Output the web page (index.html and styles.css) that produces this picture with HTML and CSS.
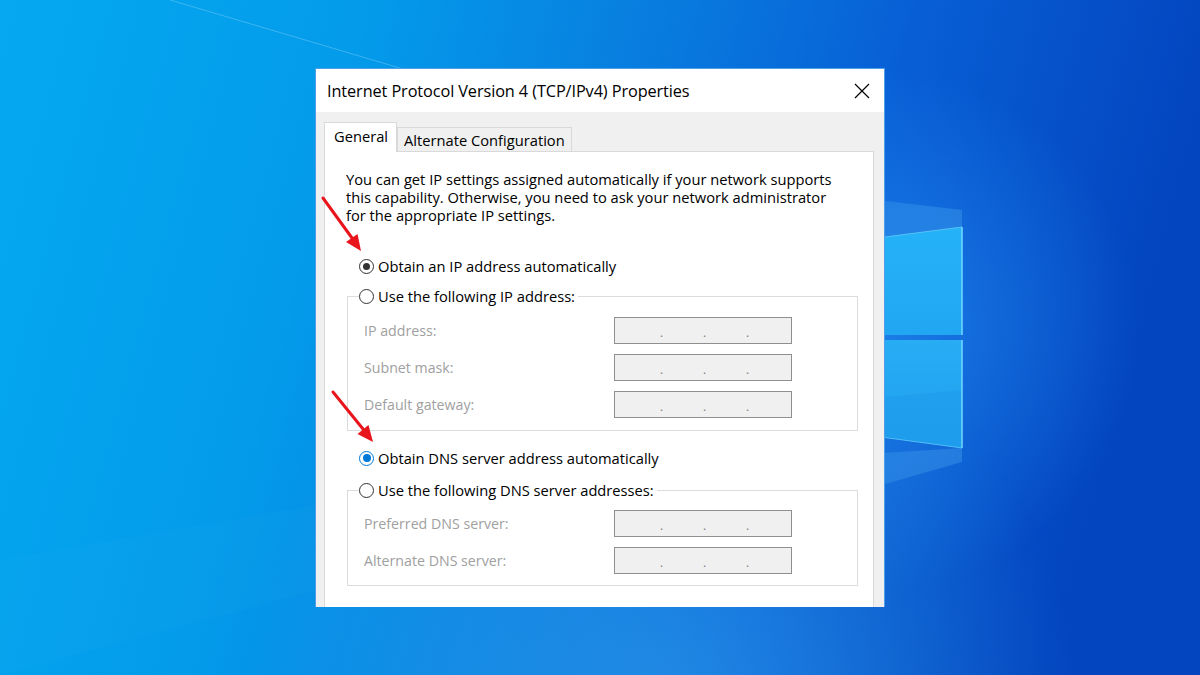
FILE: index.html
```html
<!DOCTYPE html>
<html lang="en">
  <head>
    <meta charset="UTF-8" />
    <meta name="viewport" content="width=device-width, initial-scale=1.0" />
    <title>Internet Protocol Version 4 (TCP/IPv4) Properties</title>
    <link rel="stylesheet" href="styles.css">
  </head>
  <body>
    <div class="desktop">
      <!-- wallpaper: gradient, light beams and the right half of the window logo -->
      <svg class="wallpaper" width="1200" height="675" viewBox="0 0 1200 675">
        <defs>
          <linearGradient id="bg" x1="0" y1="0" x2="1" y2="0.15">
            <stop offset="0" stop-color="#05a9f1" />
            <stop offset="0.3" stop-color="#039bea" />
            <stop offset="0.52" stop-color="#087fe0" />
            <stop offset="0.75" stop-color="#085fd5" />
            <stop offset="1" stop-color="#0345bf" />
          </linearGradient>
          <radialGradient id="glow" cx="880" cy="330" r="260" gradientUnits="userSpaceOnUse">
            <stop offset="0" stop-color="#2fa0ff" stop-opacity="0.5" />
            <stop offset="1" stop-color="#2fa0ff" stop-opacity="0" />
          </radialGradient>
          <radialGradient id="floor" cx="660" cy="720" r="420" gradientUnits="userSpaceOnUse">
            <stop offset="0" stop-color="#3cb0f2" stop-opacity="0.5" />
            <stop offset="1" stop-color="#3cb0f2" stop-opacity="0" />
          </radialGradient>
          <linearGradient id="beam" x1="1" y1="0" x2="0" y2="0">
            <stop offset="0" stop-color="#6cd0ff" stop-opacity="0.22" />
            <stop offset="1" stop-color="#6cd0ff" stop-opacity="0" />
          </linearGradient>
          <linearGradient id="pane-top" x1="0" y1="0" x2="0" y2="1">
            <stop offset="0" stop-color="#25b2f7" />
            <stop offset="1" stop-color="#21a7f2" />
          </linearGradient>
          <linearGradient id="pane-bottom" x1="0" y1="0" x2="0" y2="1">
            <stop offset="0" stop-color="#28adf4" />
            <stop offset="1" stop-color="#1f9eee" />
          </linearGradient>
        </defs>
        <rect width="1200" height="675" fill="url(#bg)" />
        <rect width="1200" height="675" fill="url(#glow)" />
        <rect width="1200" height="675" fill="url(#floor)" />
        <polygon points="0,560 800,420 800,460 0,675" fill="#5cc8ff" opacity="0.04" />
        <polygon points="620,170 962,210 962,227 620,280" fill="url(#beam)" />
        <polygon points="620,470 962,448 962,462 620,560" fill="url(#beam)" />
        <line x1="170" y1="0" x2="420" y2="74" stroke="#bfe9ff" stroke-width="1" opacity="0.3" />
        <polygon points="800,248 962,227 962,335 800,335" fill="url(#pane-top)" />
        <polygon points="800,340 962,340 962,448 800,426" fill="url(#pane-bottom)" />
        <polygon points="800,405 962,390 962,448 800,426" fill="#1c9aec" opacity="0.45" />
        <line x1="962" y1="227" x2="962" y2="335" stroke="#72d8ff" stroke-width="1.5" />
        <line x1="962" y1="340" x2="962" y2="448" stroke="#72d8ff" stroke-width="1.5" />
        <line x1="800" y1="248" x2="962" y2="227" stroke="#6ad2ff" stroke-width="1" opacity="0.7" />
        <line x1="800" y1="426" x2="962" y2="448" stroke="#6ad2ff" stroke-width="1" opacity="0.7" />
      </svg>

      <div class="dialog">
        <div class="titlebar">
          <span class="title">Internet Protocol Version 4 (TCP/IPv4) Properties</span>
          <button class="close-btn" aria-label="Close">
            <svg width="16" height="16" viewBox="0 0 16 16">
              <path d="M1 1 L15 15 M15 1 L1 15" stroke="#000" stroke-width="1.2" fill="none" />
            </svg>
          </button>
        </div>

        <div class="sheet">
          <div class="tabs">
            <div class="tab active">General</div>
            <div class="tab">Alternate Configuration</div>
          </div>

          <div class="panel">
            <p class="intro">
              You can get IP settings assigned automatically if your network supports<br />
              this capability. Otherwise, you need to ask your network administrator<br />
              for the appropriate IP settings.
            </p>

            <div class="option option-ip">
              <span class="radio checked"></span>
              <span>Obtain an IP address automatically</span>
            </div>

            <fieldset class="group">
              <legend class="option">
                <span class="radio"></span>
                <span>Use the following IP address:</span>
              </legend>
              <div class="field">
                <span class="field-label">IP address:</span>
                <span class="ip-box"><i>.</i><i>.</i><i>.</i></span>
              </div>
              <div class="field">
                <span class="field-label">Subnet mask:</span>
                <span class="ip-box"><i>.</i><i>.</i><i>.</i></span>
              </div>
              <div class="field">
                <span class="field-label">Default gateway:</span>
                <span class="ip-box"><i>.</i><i>.</i><i>.</i></span>
              </div>
            </fieldset>

            <div class="option option-dns">
              <span class="radio checked blue"></span>
              <span>Obtain DNS server address automatically</span>
            </div>

            <fieldset class="group group-dns">
              <legend class="option">
                <span class="radio"></span>
                <span>Use the following DNS server addresses:</span>
              </legend>
              <div class="field">
                <span class="field-label">Preferred DNS server:</span>
                <span class="ip-box"><i>.</i><i>.</i><i>.</i></span>
              </div>
              <div class="field">
                <span class="field-label">Alternate DNS server:</span>
                <span class="ip-box"><i>.</i><i>.</i><i>.</i></span>
              </div>
            </fieldset>
          </div>
        </div>

        <!-- red annotation arrows -->
        <svg class="arrows" width="570" height="538" viewBox="0 0 570 538">
          <path d="M7 129 L36 169" stroke="#e8161c" stroke-width="3" stroke-linecap="round" />
          <polygon points="45,182 41.5,165 30,173" fill="#e8161c" />
          <path d="M17 323 L47 360" stroke="#e8161c" stroke-width="3" stroke-linecap="round" />
          <polygon points="57,373 52.5,356 41.5,365" fill="#e8161c" />
        </svg>
      </div>
    </div>
  </body>
</html>
```

FILE: styles.css
```css
* {
  margin: 0;
  padding: 0;
  box-sizing: border-box;
}

body {
  width: 1200px;
  height: 675px;
  overflow: hidden;
  font-family: "Open Sans", "Noto Sans", sans-serif;
  background-color: #0a86e2;
}

.desktop {
  position: relative;
  width: 1200px;
  height: 675px;
  padding-top: 68px;
}

.wallpaper {
  position: absolute;
  left: 0;
  top: 0;
}

.dialog {
  position: relative;
  width: 570px;
  height: 539px;
  margin: 0 auto;
  background-color: #f0f0f0;
  border: 1px solid #4f9ee6;
  border-bottom: none;
  overflow: hidden;
}

.titlebar {
  height: 43px;
  background-color: #fff;
  display: flex;
  align-items: center;
  justify-content: space-between;
  padding: 0 12px 0 11px;
}

.title {
  font-size: 16.3px;
  color: #000;
  letter-spacing: -0.1px;
}

.close-btn {
  border: none;
  background: none;
  width: 20px;
  height: 20px;
  display: flex;
  align-items: center;
  justify-content: center;
}

.sheet {
  padding: 10px 10px 0 8px;
}

.tabs {
  display: flex;
  align-items: flex-end;
  height: 29px;
}

.tab {
  font-size: 14.7px;
  color: #000;
  border: 1px solid #d9d9d9;
  border-bottom: none;
  background-color: #f0f0f0;
  height: 24px;
  padding: 0 6px 0 6px;
  display: flex;
  align-items: center;
}

.tab.active {
  background-color: #fff;
  height: 30px;
  margin-bottom: -1px;
  padding: 0 8px 4px 9px;
  position: relative;
  z-index: 1;
}

.panel {
  background-color: #fff;
  border: 1px solid #d9d9d9;
  height: 470px;
  padding: 18px 16px 0 21px;
}

.intro {
  font-size: 14.7px;
  line-height: 18px;
  color: #000;
}

.option {
  display: flex;
  align-items: center;
  gap: 4px;
  height: 22px;
  font-size: 14.7px;
  color: #000;
}

.option-ip {
  margin: 31px 0 0 13px;
}

.option-dns {
  margin: 16px 0 0 13px;
}

.radio {
  width: 15px;
  height: 15px;
  border: 1px solid #333;
  border-radius: 50%;
  background-color: #fff;
  display: flex;
  align-items: center;
  justify-content: center;
}

.radio.checked::after {
  content: "";
  width: 7px;
  height: 7px;
  border-radius: 50%;
  background-color: #333;
}

.radio.checked {
  border: 1.5px solid #333;
}

.radio.blue {
  border-color: #0078d7;
}

.radio.blue::after {
  width: 8px;
  height: 8px;
  background-color: #0078d7;
}

.group {
  border: 1px solid #dcdcdc;
  margin: 8px 0 0 1px;
  width: 511px;
  padding: 10px 0 12px 11px;
  display: flex;
  flex-direction: column;
  gap: 10px;
}

.group-dns {
  margin-top: 10px;
  padding-top: 9px;
  padding-bottom: 11px;
}

.group legend {
  padding-right: 3px;
}

.field {
  display: grid;
  grid-template-columns: 250px 178px;
  align-items: center;
  padding-left: 5px;
}

.field-label {
  font-size: 14.2px;
  color: #a0a0a0;
}

.ip-box {
  height: 27px;
  border: 1px solid #8f8f8f;
  background-color: #f0f0f0;
  display: flex;
  align-items: center;
  padding: 4px 0 0 45px;
  gap: 40px;
}

.ip-box i {
  font-style: normal;
  font-size: 12px;
  color: #7a7a7a;
  width: 3px;
}

.arrows {
  position: absolute;
  left: 0;
  top: 0;
  pointer-events: none;
}
```
